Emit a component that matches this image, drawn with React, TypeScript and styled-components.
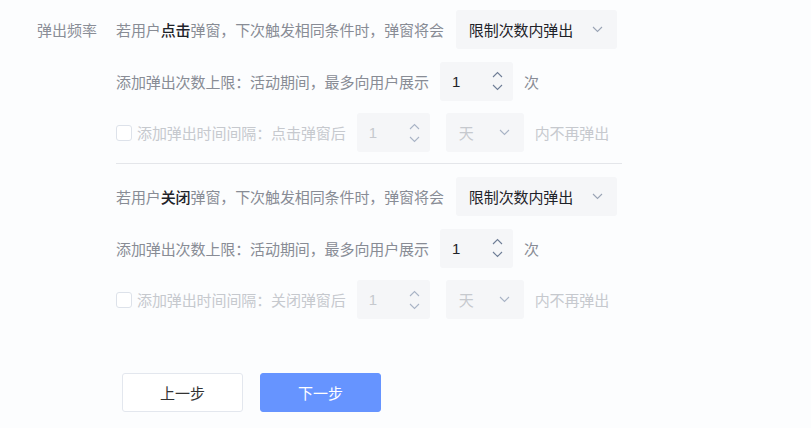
import React from 'react'
import styled, { createGlobalStyle } from 'styled-components'

const GlobalStyle = createGlobalStyle`
    html, body {
        margin: 0;
        padding: 0;
        background: #fcfdfe;
        font-family: "Noto Sans CJK SC", "Noto Sans", sans-serif;
    }
`

const Page = styled.div`
    width: 811px;
    height: 428px;
    padding: 10px 0 0 37px;
    box-sizing: border-box;
`

const FormRow = styled.div`
    display: flex;
    align-items: flex-start;
`

const Label = styled.div`
    width: 79px;
    height: 39px;
    line-height: 39px;
    font-size: 15px;
    color: #8a8e97;
`

const Content = styled.div`
    display: flex;
    flex-direction: column;
    width: 506px;
`

const GroupBox = styled.div`
    display: flex;
    flex-direction: column;
    gap: 12.5px;
`

const Line = styled.div<{ $disabled?: boolean }>`
    display: flex;
    align-items: center;
    height: 39px;
    font-size: 15px;
    letter-spacing: -0.1px;
    white-space: nowrap;
    color: ${(p) => (p.$disabled ? '#c6c9ce' : '#888c95')};
`

const Strong = styled.b`
    font-weight: 500;
    color: #1f2329;
`

const Select = styled.div<{ $width: number; $disabled?: boolean; $ml: number }>`
    display: flex;
    align-items: center;
    justify-content: space-between;
    width: ${(p) => p.$width}px;
    height: 39px;
    margin-left: ${(p) => p.$ml}px;
    padding: 0 14px 0 13px;
    box-sizing: border-box;
    background: #f5f6f8;
    border-radius: 3px;
    color: ${(p) => (p.$disabled ? '#c6c9ce' : '#1f2329')};
`

const NumberBox = styled.div<{ $disabled?: boolean; $ml: number }>`
    display: flex;
    align-items: center;
    justify-content: space-between;
    width: 73px;
    height: 39px;
    margin-left: ${(p) => p.$ml}px;
    padding: 0 10px 0 12px;
    box-sizing: border-box;
    background: #f5f6f8;
    border-radius: 3px;
    font-family: "Liberation Sans", Arial, sans-serif;
    color: ${(p) => (p.$disabled ? '#c6c9ce' : '#1f2329')};
`

const Spinner = styled.div`
    display: flex;
    flex-direction: column;
    gap: 6px;
`

const Checkbox = styled.span`
    width: 16px;
    height: 16px;
    margin-right: 5px;
    box-sizing: border-box;
    border: 1px solid #dde2ea;
    border-radius: 3px;
    background: #fff;
`

const Suffix = styled.span<{ $ml: number }>`
    margin-left: ${(p) => p.$ml}px;
`

const Divider = styled.div`
    height: 1px;
    background: #e4e6ea;
    margin: 11px 0 13px;
`

const Actions = styled.div`
    display: flex;
    gap: 17px;
    margin: 54px 0 0 85px;
`

const Button = styled.button<{ $primary?: boolean }>`
    width: 121px;
    height: 39px;
    border-radius: 3px;
    font-family: inherit;
    font-size: 15px;
    cursor: pointer;
    border: 1px solid ${(p) => (p.$primary ? '#6694ff' : '#e3e7ee')};
    background: ${(p) => (p.$primary ? '#6694ff' : '#fff')};
    color: ${(p) => (p.$primary ? '#fff' : '#333')};
`

const Chevron = ({ up, color }: { up?: boolean; color: string }) => (
    <svg width="11" height="7" viewBox="0 0 11 7" fill="none">
        <path
            d={up ? 'M1 6 L5.5 1.5 L10 6' : 'M1 1 L5.5 5.5 L10 1'}
            stroke={color}
            strokeWidth="1.1"
        />
    </svg>
)

const NumberInput = ({ disabled, ml }: { disabled?: boolean; ml: number }) => {
    const c = disabled ? '#a9b4c6' : '#6e7d96'
    return (
        <NumberBox $disabled={disabled} $ml={ml}>
            <span>1</span>
            <Spinner>
                <Chevron up color={c} />
                <Chevron color={c} />
            </Spinner>
        </NumberBox>
    )
}

const Group = ({ action, after }: { action: string; after: string }) => (
    <GroupBox>
        <Line>
            若用户<Strong>{action}</Strong>弹窗，下次触发相同条件时，弹窗将会
            <Select $width={161} $ml={12}>
                限制次数内弹出
                <Chevron color="#9aa4b5" />
            </Select>
        </Line>
        <Line>
            添加弹出次数上限：活动期间，最多向用户展示
            <NumberInput ml={11} />
            <Suffix $ml={11}>次</Suffix>
        </Line>
        <Line $disabled>
            <Checkbox />
            添加弹出时间间隔：{after}
            <NumberInput disabled ml={11} />
            <Select $width={78} $ml={16} $disabled>
                天
                <Chevron color="#a9b4c6" />
            </Select>
            <Suffix $ml={11}>内不再弹出</Suffix>
        </Line>
    </GroupBox>
)

const App = () => {
    return (
        <Page>
            <GlobalStyle />
            <FormRow>
                <Label>弹出频率</Label>
                <Content>
                    <Group action="点击" after="点击弹窗后" />
                    <Divider />
                    <Group action="关闭" after="关闭弹窗后" />
                </Content>
            </FormRow>
            <Actions>
                <Button>上一步</Button>
                <Button $primary>下一步</Button>
            </Actions>
        </Page>
    )
}

export default App
